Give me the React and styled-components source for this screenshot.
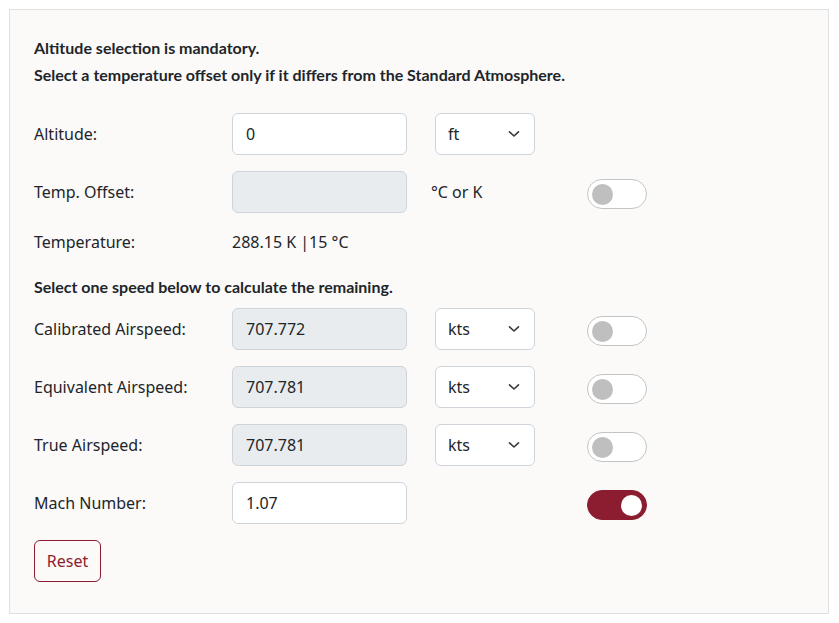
import React from 'react';
import styled, { createGlobalStyle } from 'styled-components';

const GlobalStyle = createGlobalStyle`
  body {
    margin: 0;
    background: #ffffff;
    font-family: "Noto Sans", "Open Sans", sans-serif;
    color: #212529;
  }
`;

const Page = styled.div`
  padding: 9px 10px 9px 9px;
`;

const Card = styled.div`
  background: #fbfaf9;
  border: 1px solid #dfe0e2;
  padding: 24px 24px 30px 24px;
  height: 605px;
  box-sizing: border-box;
`;

const Intro = styled.p`
  margin: 0;
  font-family: Lato, sans-serif;
  font-weight: 700;
  font-size: 16px;
  line-height: 27px;
  color: #212529;
`;

const Form = styled.div`
  margin-top: 25px;
  display: flex;
  flex-direction: column;
`;

const Row = styled.div`
  display: grid;
  grid-template-columns: 198px 203px 152px 60px;
  align-items: center;
  height: ${p => (p.$short ? '26px' : '42px')};
  margin-bottom: 16px;
`;

const Label = styled.span`
  font-size: 16px;
`;

const Value = styled.span`
  font-size: 16px;
`;

const Heading = styled(Intro)`
  line-height: 22px;
  margin: 5px 0 10px 0;
`;

const Input = styled.input`
  width: 175px;
  height: 42px;
  box-sizing: border-box;
  border: 1px solid #ced4da;
  border-radius: 6px;
  background: ${p => (p.disabled ? '#e9ecef' : '#ffffff')};
  padding: 0 13px;
  font-family: "Noto Sans", sans-serif;
  font-size: 16px;
  color: #212529;
  outline: none;
`;

const Select = styled.div`
  width: 100px;
  height: 42px;
  box-sizing: border-box;
  border: 1px solid #ced4da;
  border-radius: 6px;
  background: #ffffff;
  padding: 0 14px 0 12px;
  display: flex;
  align-items: center;
  justify-content: space-between;
  font-size: 16px;
`;

const Unit = styled.span`
  font-size: 16px;
  margin-left: -4px;
`;

const Switch = styled.div`
  width: 60px;
  height: 30px;
  margin-top: 4px;
  box-sizing: border-box;
  border-radius: 15px;
  border: 1px solid ${p => (p.$on ? '#8c1c30' : '#c4c4c4')};
  background: ${p => (p.$on ? '#8c1c30' : '#ffffff')};
  display: flex;
  align-items: center;
  justify-content: ${p => (p.$on ? 'flex-end' : 'flex-start')};
  padding: 0 4px;
`;

const Knob = styled.span`
  width: 21px;
  height: 21px;
  border-radius: 50%;
  background: ${p => (p.$on ? '#ffffff' : '#bfbfbf')};
`;

const ResetButton = styled.button`
  width: 67px;
  height: 42px;
  border: 1px solid #8c1c30;
  border-radius: 6px;
  background: transparent;
  color: #8c1c30;
  font-family: "Noto Sans", sans-serif;
  font-size: 16px;
  padding: 0;
`;

const Chevron = () => (
  <svg width="12" height="8" viewBox="0 0 12 8" fill="none">
    <path d="M1.5 1.8 L6 6 L10.5 1.8" stroke="#343a40" strokeWidth="1.6" strokeLinecap="round" strokeLinejoin="round" />
  </svg>
);

const UnitSelect = ({ unit }) => (
  <Select>
    <span>{unit}</span>
    <Chevron />
  </Select>
);

const Toggle = ({ on }) => (
  <Switch $on={on}>
    <Knob $on={on} />
  </Switch>
);

const speeds = [
  { label: 'Calibrated Airspeed:', value: '707.772' },
  { label: 'Equivalent Airspeed:', value: '707.781' },
  { label: 'True Airspeed:', value: '707.781' },
];

const App = () => (
  <Page>
    <GlobalStyle />
    <Card>
      <Intro>Altitude selection is mandatory.</Intro>
      <Intro>Select a temperature offset only if it differs from the Standard Atmosphere.</Intro>
      <Form>
        <Row>
          <Label>Altitude:</Label>
          <Input defaultValue="0" />
          <UnitSelect unit="ft" />
        </Row>
        <Row>
          <Label>Temp. Offset:</Label>
          <Input disabled />
          <Unit>°C or K</Unit>
          <Toggle />
        </Row>
        <Row $short>
          <Label>Temperature:</Label>
          <Value>288.15 K |15 °C</Value>
        </Row>
        <Heading>Select one speed below to calculate the remaining.</Heading>
        {speeds.map(s => (
          <Row key={s.label}>
            <Label>{s.label}</Label>
            <Input disabled value={s.value} readOnly />
            <UnitSelect unit="kts" />
            <Toggle />
          </Row>
        ))}
        <Row>
          <Label>Mach Number:</Label>
          <Input defaultValue="1.07" />
          <span />
          <Toggle on />
        </Row>
        <div>
          <ResetButton>Reset</ResetButton>
        </div>
      </Form>
    </Card>
  </Page>
);

export default App;
